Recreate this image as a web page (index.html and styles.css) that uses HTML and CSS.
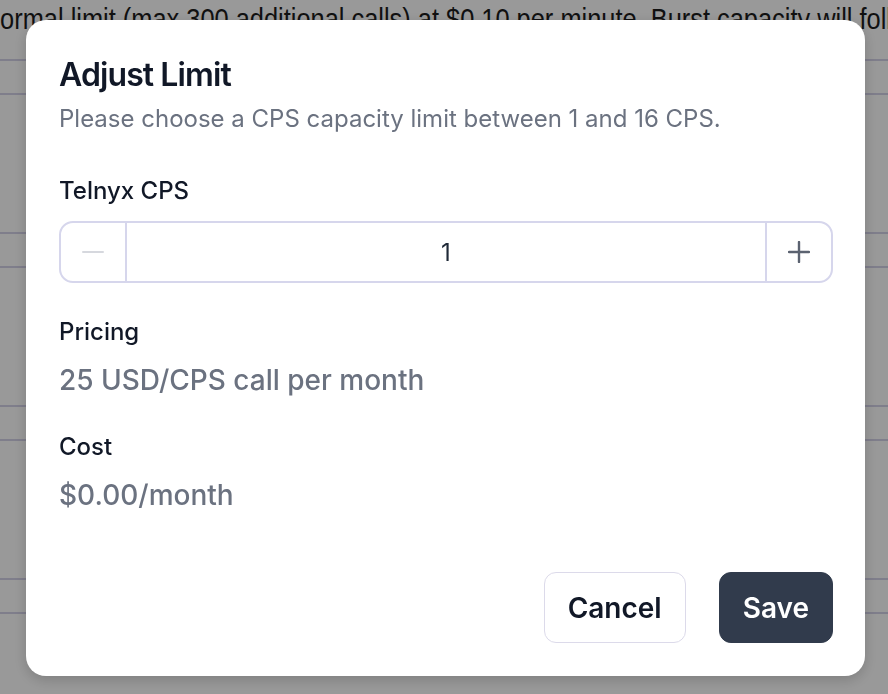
FILE: index.html
```html
<!DOCTYPE html>
<html lang="en">

<head>
    <meta charset="UTF-8">
    <meta name="viewport" content="width=device-width, initial-scale=1.0">
    <title>Adjust Limit</title>
    <link rel="stylesheet" href="styles.css">
</head>

<body>
<div class="page">
    <p class="page-note">normal limit (max 300 additional calls) at $0.10 per minute. Burst capacity will follow</p>
    <div class="table">
        <div class="table-head"></div>
        <div class="table-row"></div>
        <div class="table-head"></div>
        <div class="table-row"></div>
        <div class="table-head"></div>
        <div class="table-row"></div>
        <div class="table-head"></div>
        <div class="table-row"></div>
    </div>
</div>

<div class="overlay">
    <div class="modal" role="dialog" aria-labelledby="modal-title">
        <h2 id="modal-title" class="modal-title">Adjust Limit</h2>
        <p class="modal-subtitle">Please choose a CPS capacity limit between 1 and 16 CPS.</p>

        <label class="field-label" for="cps">Telnyx CPS</label>
        <div class="stepper">
            <button class="step-btn" disabled aria-label="Decrease">
                <svg width="22" height="22" viewBox="0 0 22 22"><path d="M1 11h20" stroke="currentColor" stroke-width="2" stroke-linecap="round"/></svg>
            </button>
            <input id="cps" class="step-value" type="text" value="1">
            <button class="step-btn" aria-label="Increase">
                <svg width="22" height="22" viewBox="0 0 22 22"><path d="M1 11h20M11 1v20" stroke="currentColor" stroke-width="2.4" stroke-linecap="round"/></svg>
            </button>
        </div>

        <div class="info">
            <div class="info-label">Pricing</div>
            <div class="info-value">25 USD/CPS call per month</div>
        </div>
        <div class="info">
            <div class="info-label">Cost</div>
            <div class="info-value">$0.00/month</div>
        </div>

        <div class="actions">
            <button class="btn btn-secondary">Cancel</button>
            <button class="btn btn-primary">Save</button>
        </div>
    </div>
</div>
</body>

</html>
```

FILE: styles.css
```css
body {
    font-family: 'Inter', 'Noto Sans', sans-serif;
    margin: 0;
    padding: 0;
    background-color: #fff;
    overflow: hidden;
}

.page {
    height: 694px;
    overflow: hidden;
}

.page-note {
    font-family: 'Liberation Sans', sans-serif;
    font-size: 25.4px;
    line-height: 30px;
    color: #1c1c1c;
    white-space: nowrap;
    margin: 0 0 0 -14px;
    padding-top: 1px;
    transform: scaleY(1.15);
    transform-origin: top left;
}

.table {
    margin-top: 28px;
}

.table-head {
    height: 32px;
    border-top: 2px solid #d4d2e8;
}

.table-row {
    height: 137px;
    border-top: 2px solid #d4d2e8;
}

.overlay {
    position: fixed;
    inset: 0;
    background-color: rgba(0, 0, 0, 0.4);
    display: flex;
    align-items: flex-start;
    justify-content: flex-start;
    padding: 20px 0 0 26px;
}

.modal {
    width: 839px;
    box-sizing: border-box;
    background-color: #fff;
    border-radius: 20px;
    padding: 35px 32px 33px 33px;
    box-shadow: 0 4px 14px rgba(0, 0, 0, 0.18);
    display: flex;
    flex-direction: column;
}

.modal-title {
    margin: 0;
    font-size: 32px;
    line-height: 40px;
    font-weight: 600;
    letter-spacing: -0.9px;
    color: #111827;
}

.modal-subtitle {
    margin: 8px 0 0;
    font-size: 24px;
    line-height: 32px;
    color: #6b7280;
}

.field-label,
.info-label {
    font-size: 24px;
    line-height: 32px;
    font-weight: 500;
    color: #111827;
}

.field-label {
    margin-top: 40px;
}

.stepper {
    margin-top: 14px;
    height: 62px;
    box-sizing: border-box;
    border: 2px solid #d6d6ec;
    border-radius: 14px;
    display: flex;
    overflow: hidden;
}

.step-btn {
    width: 64px;
    border: none;
    background: none;
    padding: 0;
    display: flex;
    align-items: center;
    justify-content: center;
    color: #5b6270;
    cursor: pointer;
}

.step-btn:disabled {
    color: #d6d8de;
    cursor: default;
}

.step-value {
    flex: 1;
    min-width: 0;
    border: none;
    border-left: 2px solid #d6d6ec;
    border-right: 2px solid #d6d6ec;
    font-family: inherit;
    font-size: 24px;
    color: #1f2937;
    text-align: center;
    outline: none;
    padding: 0;
}

.info {
    margin-top: 33px;
}

.info-value {
    margin-top: 14px;
    font-size: 28px;
    line-height: 36px;
    font-weight: 500;
    color: #6b7280;
}

.actions {
    margin-top: 59px;
    display: flex;
    justify-content: flex-end;
    gap: 33px;
}

.btn {
    height: 71px;
    padding: 0 23px;
    border-radius: 12px;
    font-family: inherit;
    font-size: 28px;
    font-weight: 600;
    cursor: pointer;
}

.btn-secondary {
    background-color: #fff;
    border: 1px solid #dcdaea;
    color: #111827;
}

.btn-primary {
    background-color: #313b4c;
    border: 1px solid #313b4c;
    color: #fff;
}
```
